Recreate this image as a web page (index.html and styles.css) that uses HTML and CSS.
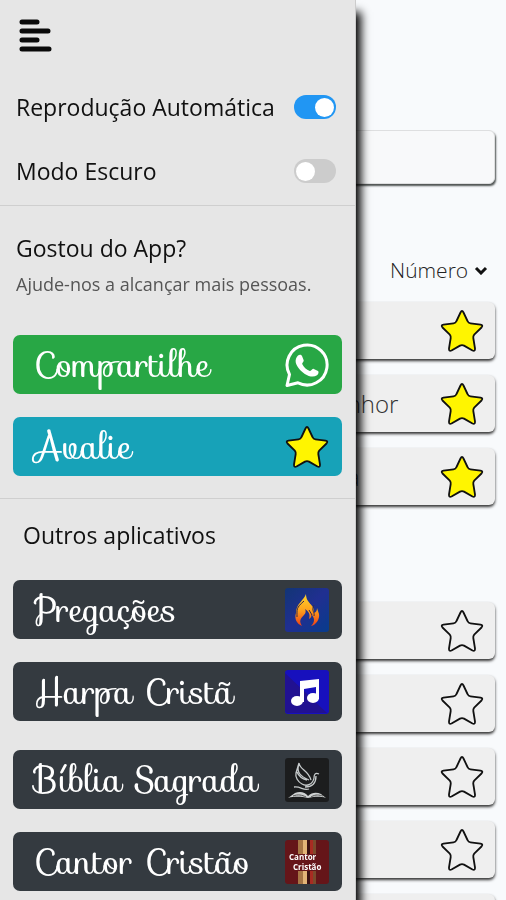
FILE: index.html
```html
<!DOCTYPE html>
<html lang="pt-BR">
<head>
<meta charset="utf-8">
<meta name="viewport" content="width=device-width, initial-scale=1">
<title>Hinos</title>
<link rel="stylesheet" href="styles.css">
</head>
<body>
<svg class="defs" aria-hidden="true">
  <symbol id="star" viewBox="0 0 44 44">
    <path d="M20.500 3.500Q22 .5 23.500 3.500L27.500 12Q28.300 14 30.500 14.300L40.500 15.600Q43.500 16.200 41.500 18.500L34.200 25.600Q33 27 33.300 29L35 39.500Q35.200 42.700 32.500 41.500L24 36.600Q22 35.600 20 36.600L11.500 41.500Q8.800 42.700 9 39.500L10.700 29Q11 27 9.800 25.600L2.500 18.500Q.5 16.200 3.500 15.600L13.500 14.300Q15.700 14 16.500 12Z" stroke="#111" stroke-width="1.800" stroke-linejoin="round"/>
  </symbol>
</svg>

<main class="page">
  <input class="search" type="text" aria-label="Pesquisar">
  <div class="sort">
    <select class="sort-select" aria-label="Ordenar"><option>Número</option></select>
    <svg class="sort-arrow" viewBox="0 0 14 9" aria-hidden="true"><path d="M2 2l5 5 5-5"/></svg>
  </div>
  <ul class="songs">
    <li class="song"><span></span><button class="fav on" aria-label="Favorito"><svg><use href="#star"/></svg></button></li>
    <li class="song"><span>Senhor</span><button class="fav on" aria-label="Favorito"><svg><use href="#star"/></svg></button></li>
    <li class="song"><span>Lua</span><button class="fav on" aria-label="Favorito"><svg><use href="#star"/></svg></button></li>
  </ul>
  <ul class="songs">
    <li class="song"><span></span><button class="fav" aria-label="Favorito"><svg><use href="#star"/></svg></button></li>
    <li class="song"><span></span><button class="fav" aria-label="Favorito"><svg><use href="#star"/></svg></button></li>
    <li class="song"><span></span><button class="fav" aria-label="Favorito"><svg><use href="#star"/></svg></button></li>
    <li class="song"><span></span><button class="fav" aria-label="Favorito"><svg><use href="#star"/></svg></button></li>
    <li class="song"><span></span><button class="fav" aria-label="Favorito"><svg><use href="#star"/></svg></button></li>
  </ul>
</main>

<aside class="drawer">
  <section class="settings">
    <button class="menu" aria-label="Menu">
      <svg viewBox="0 0 34 36"><path d="M3 4h15M3 13h26M3 22h15M3 31h27"/></svg>
    </button>
    <div class="setting"><label for="auto">Reprodução Automática</label><input class="switch" id="auto" type="checkbox" checked></div>
    <div class="setting"><label for="dark">Modo Escuro</label><input class="switch" id="dark" type="checkbox"></div>
  </section>

  <section class="support">
    <h2>Gostou do App?</h2>
    <p>Ajude-nos a alcançar mais pessoas.</p>
    <div class="actions">
      <button class="action share"><span>Compartilhe</span>
        <svg viewBox="0 0 44 44" aria-hidden="true">
          <path d="M4.500 31.500A20 20 0 1 1 13 39.800L2 42.500Z" fill="none" stroke="#fff" stroke-width="3" stroke-linejoin="round"/>
          <path d="M13 12.500c1.500-1.300 3.300-1 4 .5l1.700 4.200c.4 1.300-1.900 2.800-1.500 3.900 1.600 3.300 4 5.500 7.600 6.900 1.400.4 2.600-2.600 4-2.100l4.200 2c1 .6.600 3.300-1 4.400-3.600 2.400-8 1.200-12.200-1.400-4.200-2.700-8-7.300-9-11.200-.6-2.800.4-5.500 2.200-7.200z" fill="#fff"/>
        </svg>
      </button>
      <button class="action rate"><span>Avalie</span><svg class="gold" aria-hidden="true"><use href="#star"/></svg></button>
    </div>
  </section>

  <section class="apps">
    <h2>Outros aplicativos</h2>
    <div class="actions">
      <button class="action app"><span>Pregações</span>
        <svg viewBox="0 0 44 44" aria-hidden="true">
          <defs>
            <linearGradient id="sky" x2="1" y2="1"><stop stop-color="#123575"/><stop offset=".5" stop-color="#202f91"/><stop offset="1" stop-color="#073c8c"/></linearGradient>
            <linearGradient id="fire" x2="0" y2="1"><stop stop-color="#ffd52e"/><stop offset=".5" stop-color="#ffa21c"/><stop offset="1" stop-color="#ed3f18"/></linearGradient>
          </defs>
          <rect width="44" height="44" rx="3" fill="url(#sky)"/>
          <path d="M21 6c-2 6-10 10-10 19-2 6 1 11 6 13-3-5-2-7 2-11 2-2 2-4 1-6 5 3 5 7 4 10 2-1 3-3 2-5 4 4 4 8 0 12 5-1 9-7 8-12l-2-6c0 3-1 4-3 5 1-9-8-9-8-19z" fill="url(#fire)"/>
          <path d="M19 13C11 20 12 21 12 29M29 17c-3 6 1 7 0 11M24 22l3 5" fill="none" stroke="#352c49" stroke-width="1"/>
        </svg>
      </button>
      <button class="action app"><span>Harpa Cristã</span>
        <svg viewBox="0 0 44 44" aria-hidden="true">
          <rect width="44" height="44" rx="3" fill="#1710bd"/>
          <path d="M0 3L42 43H3a3 3 0 0 1-3-3z" fill="#211191"/>
          <path d="M15 11l19-2v20h-3V17l-12 2v13h-4z" fill="#fff"/>
          <ellipse cx="12" cy="31" rx="6" ry="5" fill="#fff"/><ellipse cx="28" cy="28" rx="6" ry="5" fill="#fff"/>
        </svg>
      </button>
    </div>
    <div class="actions">
      <button class="action app"><span>Bíblia Sagrada</span>
        <svg viewBox="0 0 44 44" aria-hidden="true">
          <rect width="44" height="44" rx="3" fill="#1c1d1e"/>
          <g fill="none" stroke="#c6cacb" stroke-width="1.300">
            <path d="M34 16c-4-2-5 1-5 4-1 6-7 9-12 6-4-2-7-7-6-11l3-10c1 7 9 7 12 17M14 6c-3 8 1 12 10 16M12 14c2 5 6 7 10 8M31 18c0 9-5 11-11 11M9 29c7-1 9 4 15 2"/>
          </g>
          <path d="M3 40l7-5c5-2 10-1 13 3 4-4 9-4 13-2l5 4c-7-2-12-1-18 0-6-1-12-2-20 0z" fill="#d0d3d3"/>
          <path d="M8 38c5-2 9-1 13 1M26 39c5-3 8-2 12-1" fill="none" stroke="#555" stroke-width="1"/>
        </svg>
      </button>
      <button class="action app"><span>Cantor Cristão</span>
        <svg viewBox="0 0 44 44" aria-hidden="true">
          <rect width="44" height="44" rx="3" fill="#651519"/>
          <path d="M13 0h5v44h-5z" fill="#a67545"/><path d="M18 0h4v44h-4z" fill="#e2b477"/><path d="M22 0h3v44h-3z" fill="#3b1112"/><path d="M25 0h3v44h-3z" fill="#a82b22"/><path d="M28 0h3v44h-3z" fill="#7b4a2c"/>
          <path d="M3 14h30v7h7v10H9v-6H3z" fill="#651519"/>
          <text class="logo-text" x="4" y="20">Cantor</text><text class="logo-text" x="8" y="30">Cristão</text>
        </svg>
      </button>
    </div>
  </section>
</aside>
</body>
</html>
```

FILE: styles.css
```css
* { box-sizing: border-box; }

body {
  margin: 0;
  height: 100vh;
  overflow: hidden;
  background: #f8fafc;
  color: #111;
  font-family: "Open Sans", "Noto Sans", sans-serif;
}

button, input, select { font: inherit; color: inherit; }
button { border: 0; padding: 0; background: none; }
ul { list-style: none; margin: 0; padding: 0; }
h2, p { margin: 0; }
.defs { position: absolute; width: 0; height: 0; }

.page { height: 100%; overflow: hidden; padding: 130px 11px 0 10px; }

.search {
  display: block;
  width: 100%;
  height: 54px;
  padding: 0 16px;
  border: 1px solid #dedfe0;
  border-radius: 6px;
  background: #f8f9fa;
  box-shadow: 1px 2px 2px #4d5251;
}

.sort {
  display: flex;
  justify-content: flex-end;
  align-items: center;
  gap: 5px;
  height: 32px;
  margin: 70px 7px 16px 0;
}
.sort-select {
  appearance: none;
  border: 0;
  padding: 0;
  background: none;
  font: 300 21px/32px "Open Sans", sans-serif;
  color: #222;
}
.sort-arrow { width: 14px; height: 9px; fill: none; stroke: #111; stroke-width: 3; }

.songs { display: grid; gap: 16px; margin-bottom: 97px; }
.song {
  display: flex;
  align-items: center;
  justify-content: space-between;
  height: 57px;
  padding: 0 11px 0 64%;
  border-radius: 6px;
  background: #efefef;
  box-shadow: 0 2px 3px #333;
  font: 300 24px/32px "Open Sans", sans-serif;
  color: #333;
}
.fav { width: 44px; height: 44px; fill: none; }
.fav svg { display: block; width: 44px; height: 44px; }
.fav.on, .gold { fill: #fff500; }

.drawer {
  position: fixed;
  top: 0;
  bottom: 0;
  left: 0;
  width: calc(70% + 2px);
  background: #e6e6e6;
  border-right: 1px solid #ccc;
  box-shadow: 5px 12px 9px #000;
  overflow: hidden;
}

.settings {
  padding: 18px 19px 17px 16px;
  border-bottom: 1px solid #cfcfcf;
}
.menu { display: block; width: 34px; height: 36px; margin: 0 0 36px 3px; }
.menu svg { display: block; width: 34px; height: 36px; fill: none; stroke: #0a0a0a; stroke-width: 5; stroke-linecap: round; }
.setting {
  display: flex;
  align-items: center;
  justify-content: space-between;
  height: 34px;
  font-size: 23px;
  line-height: 32px;
}
.setting + .setting { margin-top: 30px; }

.switch {
  appearance: none;
  display: flex;
  align-items: center;
  width: 42px;
  height: 24px;
  margin: 0;
  padding: 0 2px;
  border-radius: 12px;
  background: #ccc;
}
.switch::before { content: ""; width: 19px; height: 19px; border-radius: 50%; background: #fff; }
.switch:checked { justify-content: flex-end; background: #2196f3; }

.drawer h2 { font-size: 23px; font-weight: 400; line-height: 32px; }
.support { padding: 26px 13px 22px; border-bottom: 1px solid #cfcfcf; }
.support h2, .support p { padding-left: 3px; }
.support p { margin: 8px 0 39px; font-size: 18px; line-height: 24px; color: #555; }

.apps { padding: 20px 13px 0; }
.apps h2 { padding-left: 10px; margin-bottom: 29px; }

.actions { display: grid; gap: 23px; }
.actions + .actions { margin-top: 29px; }
.action {
  display: flex;
  align-items: center;
  justify-content: space-between;
  width: 100%;
  height: 59px;
  padding: 0 13px 0 21px;
  border-radius: 7px;
  color: #fff;
  font: 34px/44px Sofia, cursive;
}
.action svg { flex: none; width: 44px; height: 44px; }
.share { background: #28a745; }
.rate { background: #17a2b8; }
.app { background: #343a40; }
.action .logo-text { font: bold 8px/8px "Open Sans", sans-serif; fill: #fff; }
```
